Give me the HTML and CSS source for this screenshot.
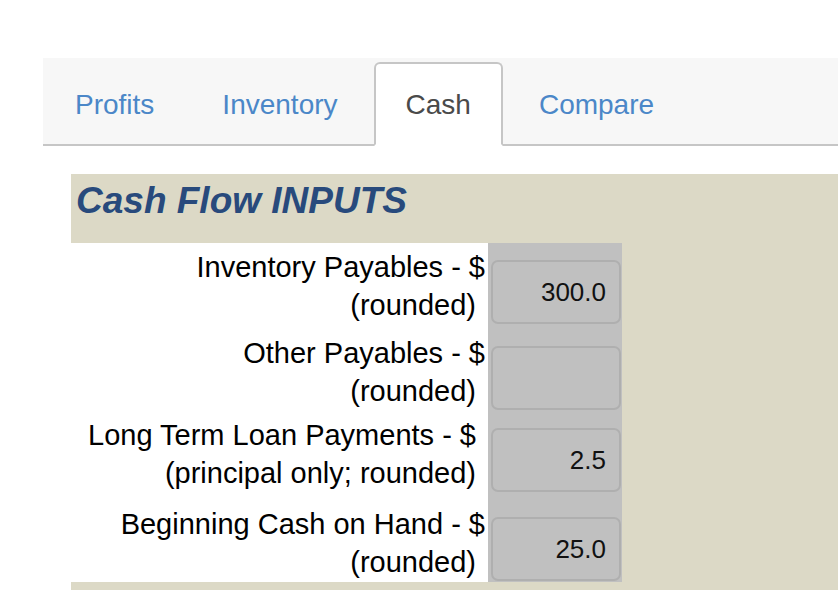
FILE: index.html
```html
<!DOCTYPE html>
<html lang="en">

<head>
  <meta charset="UTF-8">
  <meta name="viewport" content="width=device-width, initial-scale=1.0">
  <title>Cash Flow</title>
  <link rel="stylesheet" href="styles.css">
</head>

<body>
  <div class="tabs">
    <a href="#profits" class="tab">Profits</a>
    <a href="#inventory" class="tab">Inventory</a>
    <a href="#cash" class="tab active">Cash</a>
    <a href="#compare" class="tab">Compare</a>
  </div>

  <div class="panel">
    <h2 class="panel-title">Cash Flow INPUTS</h2>

    <div class="inputs">
      <label class="field-label" for="inv_payables">
        <span class="line wide">Inventory Payables - $</span>
        <span class="line">(rounded)</span>
      </label>
      <div class="field-cell">
        <input type="text" id="inv_payables" class="field" value="300.0">
      </div>

      <label class="field-label" for="other_payables">
        <span class="line wide">Other Payables - $</span>
        <span class="line">(rounded)</span>
      </label>
      <div class="field-cell">
        <input type="text" id="other_payables" class="field" value="">
      </div>

      <label class="field-label" for="loan_payments">
        <span class="line">Long Term Loan Payments - $</span>
        <span class="line">(principal only; rounded)</span>
      </label>
      <div class="field-cell">
        <input type="text" id="loan_payments" class="field" value="2.5">
      </div>

      <label class="field-label" for="cash_on_hand">
        <span class="line wide">Beginning Cash on Hand - $</span>
        <span class="line">(rounded)</span>
      </label>
      <div class="field-cell">
        <input type="text" id="cash_on_hand" class="field" value="25.0">
      </div>
    </div>
  </div>
</body>

</html>
```

FILE: styles.css
```css
html, body {
  overflow: hidden;
}

body {
  margin: 0;
  height: 590px;
  font-family: "Liberation Sans", Arial, Helvetica, sans-serif;
  background-color: #ffffff;
  color: #000000;
}

/* tab strip */
.tabs {
  display: flex;
  margin: 58px 0 0 43px;
  padding-top: 4px;
  background-color: #f7f7f7;
  border-bottom: 2px solid #c6c6c6;
}

.tab {
  display: block;
  margin-right: 4px;
  margin-bottom: -2px;
  padding: 25px 30px 23px;
  border: 2px solid transparent;
  border-radius: 6px 6px 0 0;
  font-size: 28px;
  line-height: 32px;
  color: #4b87c8;
  text-decoration: none;
}

.tab.active {
  background-color: #ffffff;
  border-color: #c6c6c6;
  border-bottom-color: #ffffff;
  color: #4a4a4a;
}

/* cash flow panel */
.panel {
  margin: 28px 0 0 71px;
  background-color: #dcd9c6;
  padding-bottom: 20px;
}

.panel-title {
  margin: 0;
  padding: 7px 0 22px 5px;
  font-size: 37px;
  line-height: 40px;
  font-weight: bold;
  font-style: italic;
  color: #284a7c;
}

.inputs {
  display: grid;
  grid-template-columns: 417px 134px;
  grid-template-rows: 82px 86px 82px 89px;
}

.field-label {
  display: flex;
  flex-direction: column;
  justify-content: flex-end;
  background-color: #ffffff;
  padding: 0 12px 1px 0;
  text-align: right;
  font-size: 29px;
  line-height: 38px;
}

.field-label .line {
  display: block;
  white-space: nowrap;
}

.field-label .line.wide {
  margin-right: -9px;
}

.field-cell {
  display: flex;
  align-items: flex-end;
  background-color: #c0c0c0;
  padding: 0 0 1px 3px;
}

.field {
  box-sizing: border-box;
  width: 130px;
  height: 64px;
  padding: 0 13px 0 8px;
  background-color: #c0c0c0;
  border: 2px solid #afafaf;
  border-radius: 7px;
  font-family: "Liberation Sans", Arial, Helvetica, sans-serif;
  font-size: 26px;
  text-align: right;
  color: #111111;
  outline: none;
}
```
